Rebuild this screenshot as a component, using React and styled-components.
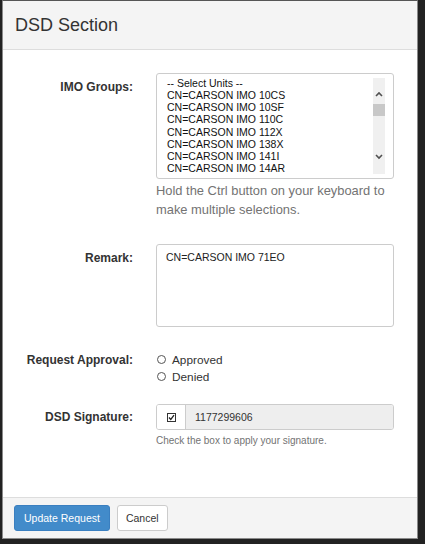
import React from "react";
import styled, { createGlobalStyle } from "styled-components";

const GlobalStyle = createGlobalStyle`
  html, body {
    margin: 0;
    padding: 0;
    background: #222222;
    font-family: "Liberation Sans", Arial, sans-serif;
    color: #333333;
  }
`;

// === Modal frame ===
const Modal = styled.div`
  box-sizing: border-box;
  width: 416px;
  margin-left: 2px;
  border: 1px solid #8a8a8a;
  border-top-color: #555555;
  background: #fff;
  display: flex;
  flex-direction: column;
`;

const Header = styled.div`
  height: 48px;
  display: flex;
  align-items: center;
  padding: 0 12px;
  background: #f4f4f4;
  border-bottom: 1px solid #dddddd;
`;

const Title = styled.h4`
  margin: 0;
  font-size: 18px;
  font-weight: normal;
  color: #333;
`;

const Body = styled.div`
  height: 447px;
  box-sizing: border-box;
  padding: 23px 22px 0 12px;
`;

const Footer = styled.div`
  display: flex;
  gap: 7px;
  padding: 7px 11px;
  background: #f4f4f4;
  border-top: 1px solid #dddddd;
`;

// === Form rows ===
const Row = styled.div`
  display: grid;
  grid-template-columns: 118px 238px;
  column-gap: 23px;
  margin-top: ${(p) => p.$mt || 0}px;
`;

const Label = styled.label`
  text-align: right;
  font-size: 12px;
  font-weight: bold;
  line-height: 14px;
  padding-top: ${(p) => p.$pt || 0}px;
  color: #333;
`;

const Help = styled.p`
  margin: ${(p) => (p.$small ? "4px 0 0" : "2px 0 0")};
  font-size: ${(p) => (p.$small ? "10px" : "12.9px")};
  line-height: ${(p) => (p.$small ? "13px" : "19px")};
  color: #737373;
`;

// === Multi-select list ===
const ListBox = styled.div`
  box-sizing: border-box;
  height: 106px;
  border: 1px solid #cccccc;
  border-radius: 3px;
  display: flex;
  overflow: hidden;
`;

const Options = styled.div`
  flex: 1;
  padding: 3px 0 0 10px;
  font-size: 10.5px;
  line-height: 12.15px;
  color: #111;
  white-space: nowrap;
  overflow: hidden;
`;

const Scrollbar = styled.div`
  width: 12px;
  margin: 4px 8px 4px 0;
  background: #f0f0f0;
  display: flex;
  flex-direction: column;
  align-items: center;
`;

const Arrow = styled.svg`
  width: 8px;
  height: 6px;
  margin-top: ${(p) => p.$mt}px;
`;

const Thumb = styled.div`
  width: 12px;
  height: 12px;
  margin-top: 7px;
  background: #c8c8c8;
`;

// === Textarea ===
const TextArea = styled.textarea`
  box-sizing: border-box;
  display: block;
  width: 238px;
  height: 83px;
  margin: 0;
  padding: 6px 9px;
  border: 1px solid #cccccc;
  border-radius: 3px;
  font-family: "Liberation Sans", Arial, sans-serif;
  font-size: 10.5px;
  line-height: 12px;
  color: #222;
  resize: none;
  outline: none;
`;

// === Radios ===
const RadioGroup = styled.div`
  display: flex;
  flex-direction: column;
`;

const RadioRow = styled.label`
  display: flex;
  align-items: center;
  gap: 6px;
  height: 17px;
  font-size: 11.8px;
  color: #333;
`;

const RadioDot = styled.span`
  box-sizing: border-box;
  width: 9px;
  height: 9px;
  margin-left: 1px;
  border: 1px solid #555;
  border-radius: 50%;
  background: #fff;
`;

// === Signature input group ===
const InputGroup = styled.div`
  box-sizing: border-box;
  height: 26px;
  display: flex;
  border: 1px solid #cccccc;
  border-radius: 3px;
  overflow: hidden;
`;

const Addon = styled.div`
  width: 28px;
  display: flex;
  align-items: center;
  justify-content: center;
  background: #fff;
  border-right: 1px solid #cccccc;
`;

const CheckBox = styled.span`
  box-sizing: border-box;
  width: 9px;
  height: 9px;
  border: 1px solid #333;
  display: flex;
  align-items: center;
  justify-content: center;
  background: #fff;
`;

const ReadOnlyField = styled.div`
  flex: 1;
  display: flex;
  align-items: center;
  padding-left: 9px;
  background: #eeeeee;
  font-size: 10.5px;
  color: #333;
`;

// === Buttons ===
const Button = styled.button`
  height: 26px;
  padding: 0 ${(p) => (p.$primary ? 9 : 8)}px;
  border-radius: 3px;
  font-family: "Liberation Sans", Arial, sans-serif;
  font-size: 10.5px;
  cursor: pointer;
  border: 1px solid ${(p) => (p.$primary ? "#3a7fc0" : "#cccccc")};
  background: ${(p) => (p.$primary ? "#428bca" : "#ffffff")};
  color: ${(p) => (p.$primary ? "#ffffff" : "#333333")};
`;

const units = [
  "-- Select Units --",
  "CN=CARSON IMO 10CS",
  "CN=CARSON IMO 10SF",
  "CN=CARSON IMO 110C",
  "CN=CARSON IMO 112X",
  "CN=CARSON IMO 138X",
  "CN=CARSON IMO 141I",
  "CN=CARSON IMO 14AR",
];

const App = () => {
  return (
    <>
      <GlobalStyle />
      <Modal>
        <Header>
          <Title>DSD Section</Title>
        </Header>

        <Body>
          <Row>
            <Label $pt={7}>IMO Groups:</Label>
            <div>
              <ListBox>
                <Options>
                  {units.map((u) => (
                    <div key={u}>{u}</div>
                  ))}
                </Options>
                <Scrollbar>
                  <Arrow $mt={13} viewBox="0 0 8 6">
                    <path d="M1 5 L4 2 L7 5" fill="none" stroke="#505050" strokeWidth="1.6" />
                  </Arrow>
                  <Thumb />
                  <Arrow $mt={38} viewBox="0 0 8 6">
                    <path d="M1 1 L4 4 L7 1" fill="none" stroke="#505050" strokeWidth="1.6" />
                  </Arrow>
                </Scrollbar>
              </ListBox>
              <Help>
                Hold the Ctrl button on your keyboard to make multiple
                selections.
              </Help>
            </div>
          </Row>

          <Row $mt={25}>
            <Label $pt={7}>Remark:</Label>
            <TextArea readOnly value="CN=CARSON IMO 71EO" />
          </Row>

          <Row $mt={24}>
            <Label $pt={2}>Request Approval:</Label>
            <RadioGroup>
              <RadioRow>
                <RadioDot />
                Approved
              </RadioRow>
              <RadioRow>
                <RadioDot />
                Denied
              </RadioRow>
            </RadioGroup>
          </Row>

          <Row $mt={19}>
            <Label $pt={6}>DSD Signature:</Label>
            <div>
              <InputGroup>
                <Addon>
                  <CheckBox>
                    <svg width="7" height="7" viewBox="0 0 7 7">
                      <path d="M1 3.5 L2.8 5.5 L6 1.2" fill="none" stroke="#222" strokeWidth="1.3" />
                    </svg>
                  </CheckBox>
                </Addon>
                <ReadOnlyField>1177299606</ReadOnlyField>
              </InputGroup>
              <Help $small>Check the box to apply your signature.</Help>
            </div>
          </Row>
        </Body>

        <Footer>
          <Button $primary>Update Request</Button>
          <Button>Cancel</Button>
        </Footer>
      </Modal>
    </>
  );
};

export default App;
